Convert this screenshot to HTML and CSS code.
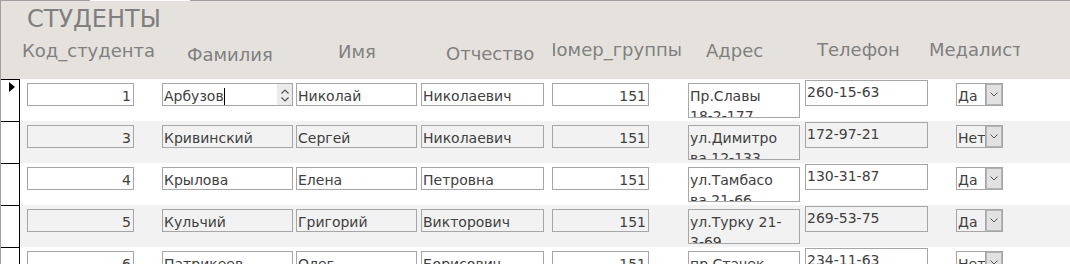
FILE: index.html
```html
<!DOCTYPE html>
<html lang="ru">
<head>
  <meta charset="UTF-8" />
  <title>СТУДЕНТЫ</title>
  <link rel="stylesheet" href="styles.css">
</head>
<body>
  <div class="form-window">
    <div class="frame-top"><span class="edge"></span><span class="gap"></span><span class="edge rest"></span></div>

    <div class="form-header">
      <h1 class="form-title">СТУДЕНТЫ</h1>
      <div class="labels">
        <div class="lbl lbl-id">Код_студента</div>
        <div class="lbl lbl-last">Фамилия</div>
        <div class="lbl lbl-first">Имя</div>
        <div class="lbl lbl-mid">Отчество</div>
        <div class="lbl lbl-group"><span>Номер_группы</span></div>
        <div class="lbl lbl-addr">Адрес</div>
        <div class="lbl lbl-phone">Телефон</div>
        <div class="lbl lbl-medal">Медалист</div>
      </div>
    </div>

    <div class="records">
      <div class="record">
        <div class="selector"><span class="arrow"></span></div>
        <div class="fields">
          <div class="fld f-id num">1</div>
          <div class="fld f-last editing">
            <span class="val">Арбузов<span class="caret"></span></span>
            <span class="spin">
              <svg width="8" height="5" viewBox="0 0 8 5"><polyline points="0.5,4.5 4,1 7.5,4.5" fill="none" stroke="#555" stroke-width="1.2"/></svg>
              <svg width="8" height="5" viewBox="0 0 8 5"><polyline points="0.5,0.5 4,4 7.5,0.5" fill="none" stroke="#555" stroke-width="1.2"/></svg>
            </span>
          </div>
          <div class="fld f-first">Николай</div>
          <div class="fld f-mid">Николаевич</div>
          <div class="fld f-group num">151</div>
          <div class="fld f-addr">Пр.Славы<br>18-2-177</div>
          <div class="fld f-phone">260-15-63</div>
          <div class="fld f-medal"><span class="combo-val">Да</span><span class="combo-btn"><svg width="8" height="5" viewBox="0 0 8 5"><polyline points="0.5,0.5 4,4 7.5,0.5" fill="none" stroke="#555" stroke-width="1"/></svg></span></div>
        </div>
      </div>

      <div class="record">
        <div class="selector"></div>
        <div class="fields">
          <div class="fld f-id num">3</div>
          <div class="fld f-last">Кривинский</div>
          <div class="fld f-first">Сергей</div>
          <div class="fld f-mid">Николаевич</div>
          <div class="fld f-group num">151</div>
          <div class="fld f-addr">ул.Димитро<br>ва 12-133</div>
          <div class="fld f-phone">172-97-21</div>
          <div class="fld f-medal"><span class="combo-val">Нет</span><span class="combo-btn"><svg width="8" height="5" viewBox="0 0 8 5"><polyline points="0.5,0.5 4,4 7.5,0.5" fill="none" stroke="#555" stroke-width="1"/></svg></span></div>
        </div>
      </div>

      <div class="record">
        <div class="selector"></div>
        <div class="fields">
          <div class="fld f-id num">4</div>
          <div class="fld f-last">Крылова</div>
          <div class="fld f-first">Елена</div>
          <div class="fld f-mid">Петровна</div>
          <div class="fld f-group num">151</div>
          <div class="fld f-addr">ул.Тамбасо<br>ва 21-66</div>
          <div class="fld f-phone">130-31-87</div>
          <div class="fld f-medal"><span class="combo-val">Да</span><span class="combo-btn"><svg width="8" height="5" viewBox="0 0 8 5"><polyline points="0.5,0.5 4,4 7.5,0.5" fill="none" stroke="#555" stroke-width="1"/></svg></span></div>
        </div>
      </div>

      <div class="record">
        <div class="selector"></div>
        <div class="fields">
          <div class="fld f-id num">5</div>
          <div class="fld f-last">Кульчий</div>
          <div class="fld f-first">Григорий</div>
          <div class="fld f-mid">Викторович</div>
          <div class="fld f-group num">151</div>
          <div class="fld f-addr">ул.Турку 21-<br>3-69</div>
          <div class="fld f-phone">269-53-75</div>
          <div class="fld f-medal"><span class="combo-val">Да</span><span class="combo-btn"><svg width="8" height="5" viewBox="0 0 8 5"><polyline points="0.5,0.5 4,4 7.5,0.5" fill="none" stroke="#555" stroke-width="1"/></svg></span></div>
        </div>
      </div>

      <div class="record">
        <div class="selector"></div>
        <div class="fields">
          <div class="fld f-id num">6</div>
          <div class="fld f-last">Патрикеев</div>
          <div class="fld f-first">Олег</div>
          <div class="fld f-mid">Борисович</div>
          <div class="fld f-group num">151</div>
          <div class="fld f-addr">пр.Стачек</div>
          <div class="fld f-phone">234-11-63</div>
          <div class="fld f-medal"><span class="combo-val">Нет</span><span class="combo-btn"><svg width="8" height="5" viewBox="0 0 8 5"><polyline points="0.5,0.5 4,4 7.5,0.5" fill="none" stroke="#555" stroke-width="1"/></svg></span></div>
        </div>
      </div>
    </div>
  </div>
</body>
</html>
```

FILE: styles.css
```css
* {
  box-sizing: border-box;
}
body {
  margin: 0;
  font-family: "DejaVu Sans", sans-serif;
  background: #fff;
  overflow: hidden;
}
.form-window {
  width: 1070px;
  height: 264px;
  border-left: 1px solid #a0a0a0;
  overflow: hidden;
}
.frame-top {
  display: flex;
  height: 1px;
}
.frame-top .edge {
  width: 89px;
  background: #a0a0a0;
}
.frame-top .gap {
  width: 100px;
  background: #fff;
}
.frame-top .rest {
  flex: 1;
}

/* header */
.form-header {
  height: 78px;
  background: #e5e2dd;
}
.form-title {
  margin: 0;
  padding: 4px 0 0 26px;
  height: 32px;
  font-size: 24px;
  line-height: 28px;
  font-weight: normal;
  color: #7f7f7f;
}
.labels {
  display: flex;
  padding-left: 21px;
}
.lbl {
  flex: none;
  font-size: 18px;
  line-height: 21px;
  color: #808080;
  white-space: nowrap;
  overflow: hidden;
}
.lbl-id { width: 165px; padding-top: 7px; }
.lbl-last { width: 151px; padding-top: 11px; }
.lbl-first { width: 108px; padding-top: 8px; }
.lbl-mid { width: 107px; padding-top: 10px; }
.lbl-group { width: 131px; padding-top: 6px; }
.lbl-group span { display: block; margin-left: -10px; }
.lbl-addr { width: 111px; margin-left: 22px; padding-top: 7px; }
.lbl-phone { width: 112px; padding-top: 6px; }
.lbl-medal { width: 91px; padding-top: 6px; }

/* records */
.record {
  display: flex;
  height: 42px;
}
.selector {
  flex: none;
  width: 19px;
  border-top: 1px solid #000;
  border-right: 1px solid #000;
  padding: 2px 0 0 8px;
}
.arrow {
  display: block;
  width: 0;
  height: 0;
  border-left: 6px solid #000;
  border-top: 5px solid transparent;
  border-bottom: 5px solid transparent;
}
.fields {
  flex: 1;
  display: flex;
  align-items: flex-start;
  padding-left: 7px;
}
.record:nth-child(even) .fields {
  background: #f2f2f2;
}
.fld {
  flex: none;
  height: 23px;
  margin-top: 4px;
  border: 1px solid #a6a6a6;
  padding: 2px 2px 0 1px;
  font-size: 14px;
  line-height: 20px;
  color: #404040;
  white-space: nowrap;
  overflow: hidden;
}
.num {
  text-align: right;
}
.f-id { width: 107px; }
.f-last { width: 131px; margin-left: 28px; }
.f-first { width: 121px; margin-left: 3px; }
.f-mid { width: 123px; margin-left: 4px; }
.f-group { width: 97px; margin-left: 8px; }
.f-addr {
  width: 112px;
  height: 35px;
  margin-left: 39px;
  white-space: normal;
}
.f-phone {
  width: 123px;
  height: 26px;
  margin-left: 5px;
  margin-top: 1px;
  padding-top: 1px;
}
.f-medal {
  width: 47px;
  margin-left: 28px;
  padding: 0;
  display: flex;
}

/* field being edited */
.editing {
  display: flex;
  padding: 0;
}
.editing .val {
  flex: 1;
  padding: 2px 0 0 1px;
}
.caret {
  display: inline-block;
  width: 1px;
  height: 17px;
  background: #000;
  vertical-align: -4px;
}
.spin {
  width: 15px;
  background: #ebebeb;
  display: flex;
  flex-direction: column;
  align-items: center;
  justify-content: space-around;
  padding: 3px 0 2px;
}
.spin svg {
  display: block;
}

/* combo box */
.combo-val {
  flex: 1;
  padding: 2px 0 0 1px;
  overflow: hidden;
}
.combo-btn {
  width: 17px;
  flex: none;
  background: #e1e1e1;
  border: 1px solid #a6a6a6;
  border-width: 0 0 0 1px;
  box-shadow: inset 0 0 0 1px #b4b4b4;
  display: flex;
  align-items: center;
  justify-content: center;
}
.combo-btn svg {
  display: block;
}
```
